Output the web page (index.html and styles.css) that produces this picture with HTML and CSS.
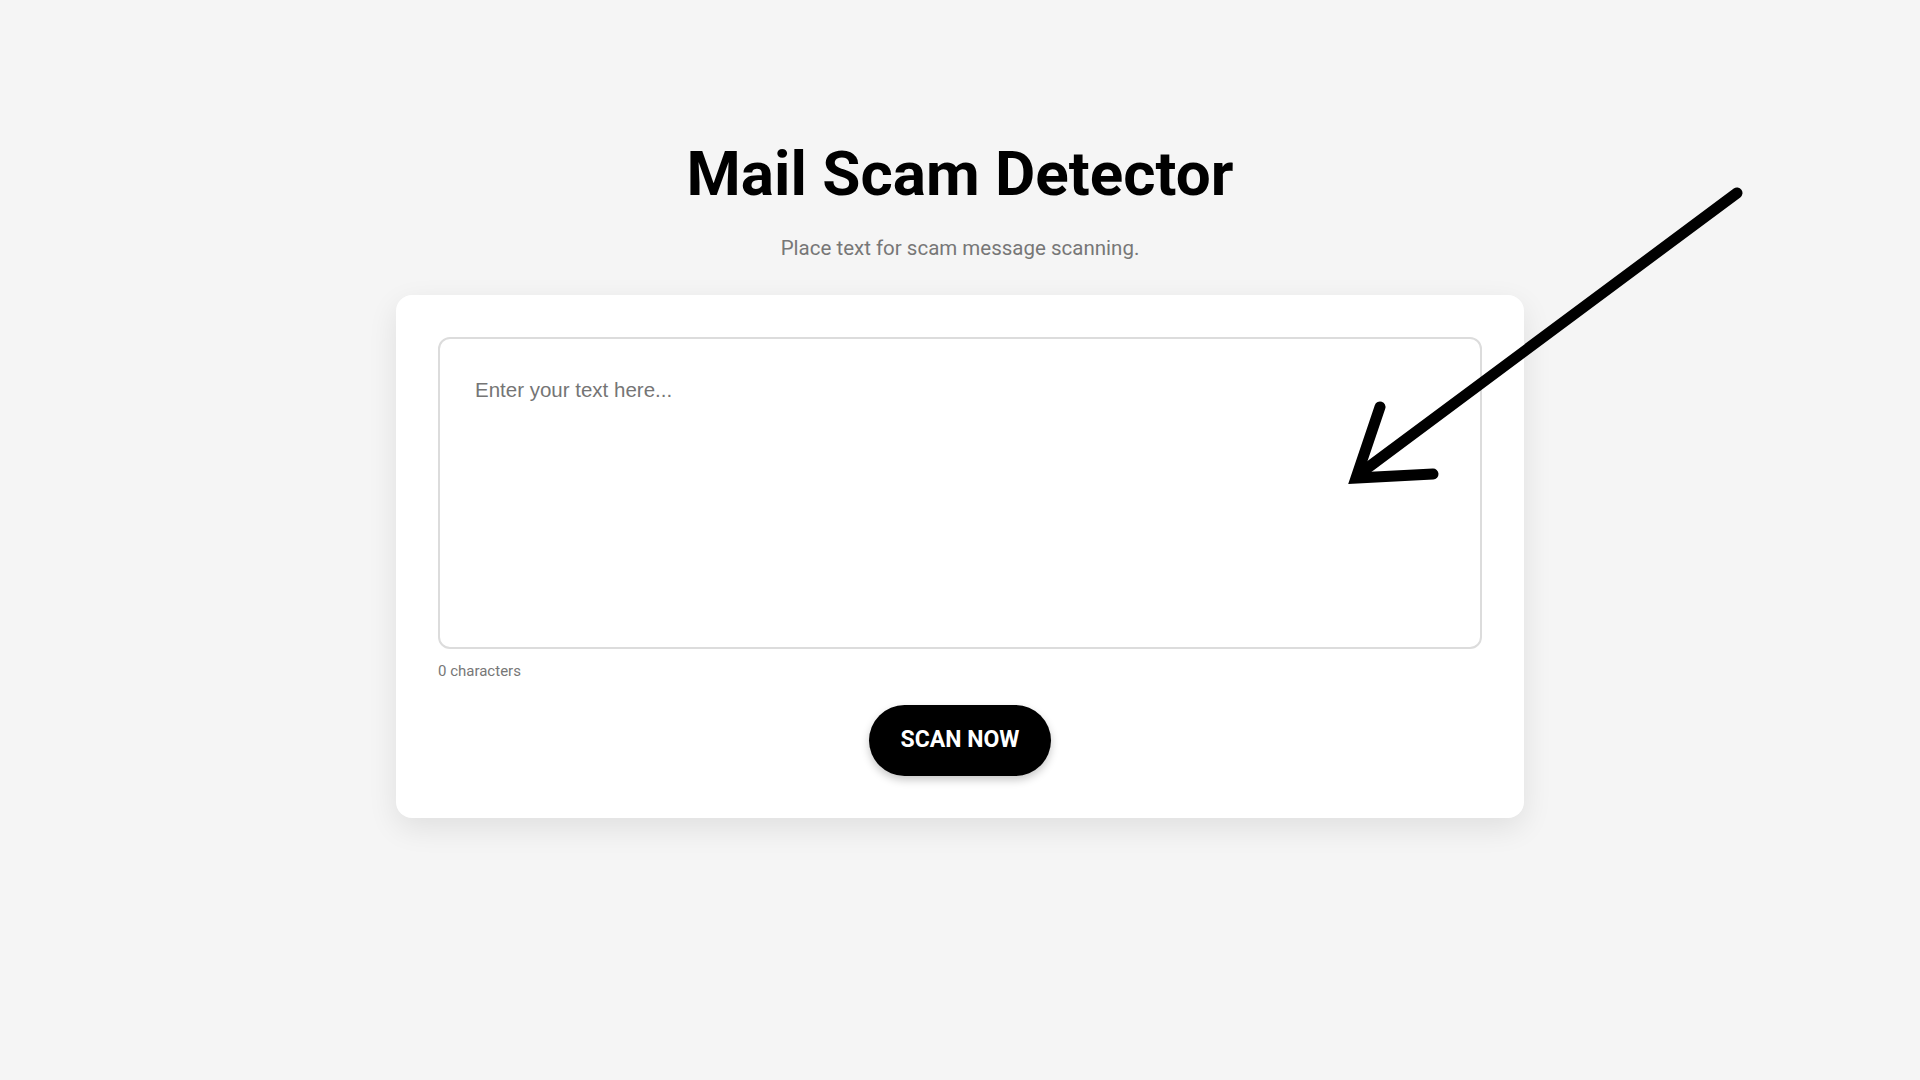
FILE: index.html
```html
<!DOCTYPE html>
<html lang="en">
<head>
<meta charset="utf-8">
<title>Mail Scam Detector</title>
<link rel="stylesheet" href="styles.css">
</head>
<body>
<main class="page">
  <h1 class="title">Mail Scam Detector</h1>
  <p class="subtitle">Place text for scam message scanning.</p>
  <section class="card">
    <textarea class="input" placeholder="Enter your text here..."></textarea>
    <div class="counter">0 characters</div>
    <div class="actions">
      <button class="scan-btn" type="button">SCAN NOW</button>
    </div>
  </section>
</main>
<svg class="arrow" width="1920" height="1080" viewBox="0 0 1920 1080" aria-hidden="true">
  <path d="M1737 193 L1362 472" fill="none" stroke="#000" stroke-width="11" stroke-linecap="round"/>
  <path d="M1380 407 L1356 478 L1433 474" fill="none" stroke="#000" stroke-width="11" stroke-linecap="round" stroke-linejoin="miter" stroke-miterlimit="10"/>
</svg>
</body>
</html>
```
FILE: styles.css
```css
html, body {
  margin: 0;
  padding: 0;
}
body {
  background: #f5f5f5;
  font-family: Roboto, "Liberation Sans", Arial, sans-serif;
  color: #000;
  min-height: 1080px;
  position: relative;
  overflow: hidden;
}
.page {
  display: flex;
  flex-direction: column;
  align-items: center;
  padding-top: 138px;
}
.title {
  margin: 0;
  font-size: 62px;
  font-weight: 700;
  line-height: 1.172;
  color: #000;
}
.subtitle {
  margin: 25px 0 35px;
  font-size: 20.5px;
  line-height: 1.172;
  color: #777;
}
.card {
  box-sizing: border-box;
  width: 1128px;
  padding: 42px;
  background: #fff;
  border-radius: 16px;
  box-shadow: 0 10px 30px rgba(0, 0, 0, 0.09);
}
.input {
  display: block;
  box-sizing: border-box;
  width: 100%;
  height: 312px;
  margin: 0;
  padding: 39px 35px;
  border: 2px solid #dcdcdc;
  border-radius: 12px;
  font-family: "Liberation Sans", Arial, sans-serif;
  font-size: 20.5px;
  color: #333;
  background: #fff;
  resize: none;
  outline: none;
}
.input::placeholder {
  color: #757575;
}
.counter {
  margin-top: 14px;
  font-size: 15px;
  line-height: 1.172;
  color: #777;
}
.actions {
  display: flex;
  justify-content: center;
  margin-top: 25px;
}
.scan-btn {
  font-family: Roboto, "Liberation Sans", Arial, sans-serif;
  font-size: 23px;
  font-weight: 700;
  line-height: 1.172;
  color: #fff;
  background: #000;
  border: none;
  border-radius: 999px;
  padding: 22px 32px;
  box-shadow: 0 4px 8px rgba(0, 0, 0, 0.22);
  cursor: pointer;
}
.arrow {
  position: absolute;
  left: 0;
  top: 0;
  pointer-events: none;
}
```
